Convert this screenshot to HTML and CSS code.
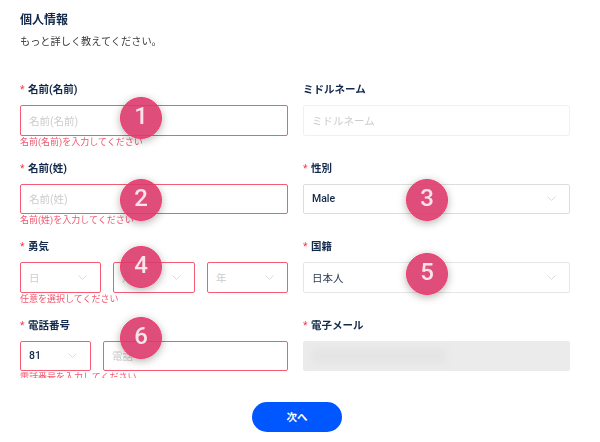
FILE: index.html
```
<!DOCTYPE html>
<html lang="ja">
<head>
<meta charset="utf-8">
<title>個人情報</title>
<link rel="stylesheet" href="styles.css">
</head>
<body>
<main class="page">
  <div class="scroll">
    <h1 class="title">個人情報</h1>
    <p class="sub">もっと詳しく教えてください。</p>
    <form class="grid">
      <div class="field">
        <div class="label"><span class="star">*</span>名前(名前)</div>
        <div class="control invalid"><span class="ph">名前(名前)</span></div>
        <div class="error">名前(名前)を入力してください</div>
      </div>
      <div class="field">
        <div class="label">ミドルネーム</div>
        <div class="control muted"><span class="ph">ミドルネーム</span></div>
      </div>
      <div class="field">
        <div class="label"><span class="star">*</span>名前(姓)</div>
        <div class="control invalid"><span class="ph">名前(姓)</span></div>
        <div class="error">名前(姓)を入力してください</div>
      </div>
      <div class="field">
        <div class="label"><span class="star">*</span>性別</div>
        <div class="control select"><span class="val med">Male</span>
          <svg class="chev" viewBox="0 0 9 5"><path d="M.5.5l4 4 4-4"/></svg></div>
      </div>
      <div class="field">
        <div class="label"><span class="star">*</span>勇気</div>
        <div class="dob">
          <div class="control invalid select"><span class="ph">日</span>
            <svg class="chev" viewBox="0 0 9 5"><path d="M.5.5l4 4 4-4"/></svg></div>
          <div class="control invalid select"><span class="ph">月</span>
            <svg class="chev" viewBox="0 0 9 5"><path d="M.5.5l4 4 4-4"/></svg></div>
          <div class="control invalid select"><span class="ph">年</span>
            <svg class="chev" viewBox="0 0 9 5"><path d="M.5.5l4 4 4-4"/></svg></div>
        </div>
        <div class="error">任意を選択してください</div>
      </div>
      <div class="field">
        <div class="label"><span class="star">*</span>国籍</div>
        <div class="control select soft"><span class="val">日本人</span>
          <svg class="chev" viewBox="0 0 9 5"><path d="M.5.5l4 4 4-4"/></svg></div>
      </div>
      <div class="field">
        <div class="label"><span class="star">*</span>電話番号</div>
        <div class="phone">
          <div class="control invalid select"><span class="val med">81</span>
            <svg class="chev" viewBox="0 0 9 5"><path d="M.5.5l4 4 4-4"/></svg></div>
          <div class="control invalid"><span class="ph">電話</span></div>
        </div>
        <div class="error">電話番号を入力してください</div>
      </div>
      <div class="field">
        <div class="label"><span class="star">*</span>電子メール</div>
        <div class="control disabled"><span class="smear"></span></div>
      </div>
    </form>
  </div>
  <div class="actions"><button type="button" class="next">次へ</button></div>
  <span class="badge b1">1</span>
  <span class="badge b2">2</span>
  <span class="badge b3">3</span>
  <span class="badge b4">4</span>
  <span class="badge b5">5</span>
  <span class="badge b6">6</span>
</main>
</body>
</html>
```
FILE: styles.css
```
* { box-sizing: border-box; }
html, body { margin: 0; background: #fff; }
body { font-family: Roboto, "Noto Sans CJK JP", sans-serif; color: #13294b; }
.page { position: relative; width: 600px; height: 442px; overflow: hidden; filter: blur(.35px); }
.scroll { height: 378px; padding: 12px 30px 0 20px; overflow: hidden; }
.title { margin: 0; font-size: 12px; line-height: 16px; font-weight: 700; color: #13294b; }
.sub { margin: 6px 0 0; font-size: 10.2px; line-height: 16px; color: #3a3a3a; }
.grid { display: grid; grid-template-columns: 268px 267px; column-gap: 15px; grid-auto-rows: 78.5px; margin-top: 31px; }
.field { display: flex; flex-direction: column; min-width: 0; }
.label { height: 16px; margin-top: 1px; margin-bottom: 7px; font-size: 10.5px; line-height: 16px; font-weight: 700; color: #13294b; flex: none; }
.star { color: #f5384f; margin-right: 3.5px; font-weight: 400; }
.control { display: flex; align-items: center; height: 30.5px; flex: none; padding: 0 8px; border: 1.2px solid #ddd; border-radius: 2px; font-size: 10.5px; background: #fff; }
.invalid { border-color: #f65c74; }
.muted { border-color: #f0f0f0; }
.soft { border-color: #e6e6e6; }
.select { justify-content: space-between; padding-right: 13px; }
.ph { color: #cdcdcd; }
.val { color: #2b3a52; }
.med { font-weight: 500; color: #13294b; }
.chev { width: 9px; height: 5px; fill: none; stroke: #dcdcdc; stroke-width: 1; }
.disabled { background: #ebebeb; border-color: #ebebeb; padding: 0 7px; }
.smear { display: block; width: 135px; height: 16px; background: #e5e5e5; filter: blur(3px); }
.error { font-size: 9px; line-height: 13px; color: #f0566e; white-space: nowrap; }
.dob { display: grid; grid-template-columns: 81px 82px 81px; column-gap: 12px; }
.phone { display: grid; grid-template-columns: 71px 185px; column-gap: 12px; }
.actions { display: flex; justify-content: center; padding: 24px 6px 0 0; }
.next { width: 90px; height: 30px; border: 0; border-radius: 15px; background: #0057ff; color: #fff; font-family: inherit; font-size: 10.5px; font-weight: 700; padding: 0 0 2px; }
.badge { position: absolute; width: 42px; height: 42px; border-radius: 50%; border: 1.5px solid #f23a6b; background: rgba(220, 58, 108, .9); box-shadow: 0 2px 8px rgba(0,0,0,.3); color: #fbe3ea; font-size: 24px; line-height: 37px; text-align: center; font-weight: 500; }
.b1 { left: 120px; top: 97px; }
.b2 { left: 120px; top: 179px; }
.b3 { left: 406px; top: 179px; }
.b4 { left: 120px; top: 246px; }
.b5 { left: 406px; top: 253px; }
.b6 { left: 120px; top: 317px; }
```
